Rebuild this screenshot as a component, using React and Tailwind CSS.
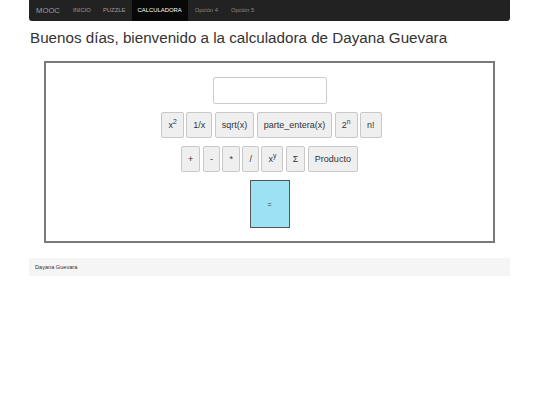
import React from "react";

const Btn = ({ children, className = "" }) => (
  <button
    className={
      "h-[26px] px-[6px] border border-[#c8c8c8] bg-[#efefef] rounded-[2px] text-[9px] text-[#333] leading-none " +
      className
    }
  >
    {children}
  </button>
);

export default function App() {
  return (
    <div
      className="w-[540px] min-h-[405px] bg-white text-[#333]"
      style={{ fontFamily: '"Liberation Sans", Arial, sans-serif' }}
    >
      <div className="ml-[29px] w-[481px]">
        <nav className="h-[21px] bg-[#222] rounded-b-[3px] flex items-stretch pl-[7px]">
          <span className="flex items-center text-[7.7px] text-[#9d9d9d] pr-[7px]">MOOC</span>
          <span className="flex items-center px-[6px] text-[5.9px] text-[#9d9d9d]">INICIO</span>
          <span className="flex items-center px-[6px] text-[5.9px] text-[#9d9d9d]">PUZZLE</span>
          <span className="flex items-center px-[6px] text-[5.9px] text-white bg-[#080808]">CALCULADORA</span>
          <span className="flex items-center px-[6px] text-[5.8px] text-[#8a8a8a] ml-[1px]">Opción 4</span>
          <span className="flex items-center px-[6px] text-[5.8px] text-[#8a8a8a] ml-[1px]">Opción 5</span>
        </nav>
        <h1 className="mt-[8px] text-[15.2px] leading-[18px] font-normal pl-[1px]">
          Buenos días, bienvenido a la calculadora de Dayana Guevara
        </h1>
        <div className="mt-[14px] mx-[15px] h-[182px] border-2 border-[#7a7a7a] flex flex-col items-center pt-[14px]">
          <div className="w-[114px] h-[27px] border border-[#ccc] rounded-[2px] bg-white"></div>
          <div className="mt-[8px] flex gap-[2.5px] items-center pl-[4px]">
            <Btn>
              x<sup>2</sup>
            </Btn>
            <Btn>1/x</Btn>
            <Btn>sqrt(x)</Btn>
            <Btn>parte_entera(x)</Btn>
            <Btn>
              2<sup>n</sup>
            </Btn>
            <Btn>n!</Btn>
          </div>
          <div className="mt-[8px] flex gap-[2.5px] items-center">
            <Btn>+</Btn>
            <Btn>-</Btn>
            <Btn>*</Btn>
            <Btn>/</Btn>
            <Btn>
              x<sup>y</sup>
            </Btn>
            <Btn>Σ</Btn>
            <Btn>Producto</Btn>
          </div>
          <button className="mt-[8px] w-[40px] h-[48px] bg-[#9de1f5] border border-[#555] text-[7px] text-[#333] leading-none">
            =
          </button>
        </div>
        <div className="mt-[15px] h-[18px] bg-[#f5f5f5] flex items-center pl-[6px] text-[5.6px] text-[#333]">
          Dayana Guevara
        </div>
      </div>
    </div>
  );
}
